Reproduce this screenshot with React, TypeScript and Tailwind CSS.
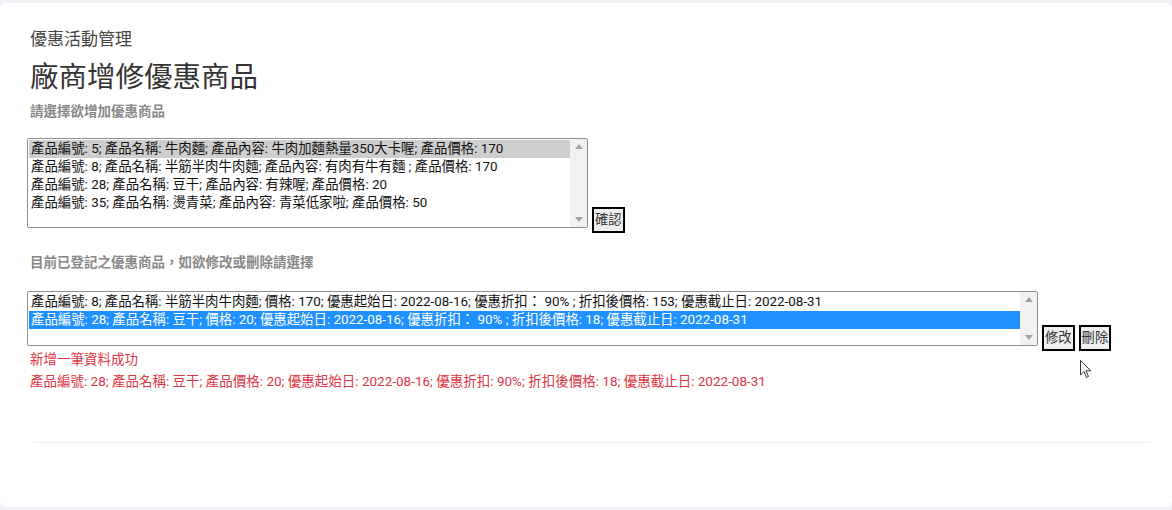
import React, { useState } from 'react';

const font = { fontFamily: '"Roboto", "Noto Sans CJK TC", sans-serif' };

const products = [
  '產品編號: 5; 產品名稱: 牛肉麵; 產品內容: 牛肉加麵熱量350大卡喔; 產品價格: 170',
  '產品編號: 8; 產品名稱: 半筋半肉牛肉麵; 產品內容: 有肉有牛有麵 ; 產品價格: 170',
  '產品編號: 28; 產品名稱: 豆干; 產品內容: 有辣喔; 產品價格: 20',
  '產品編號: 35; 產品名稱: 燙青菜; 產品內容: 青菜低家啦; 產品價格: 50',
];

const discounts = [
  '產品編號: 8; 產品名稱: 半筋半肉牛肉麵; 價格: 170; 優惠起始日: 2022-08-16; 優惠折扣： 90% ; 折扣後價格: 153; 優惠截止日: 2022-08-31',
  '產品編號: 28; 產品名稱: 豆干; 價格: 20; 優惠起始日: 2022-08-16; 優惠折扣： 90% ; 折扣後價格: 18; 優惠截止日: 2022-08-31',
];

const ScrollTrack: React.FC = () => (
  <div className="w-[17px] bg-[#f1f1f1] flex flex-col justify-between items-center py-[5px]">
    <svg width="8" height="5" viewBox="0 0 8 5">
      <path d="M0 5 L4 0 L8 5 Z" fill="#a3a3a3" />
    </svg>
    <svg width="8" height="5" viewBox="0 0 8 5">
      <path d="M0 0 L4 5 L8 0 Z" fill="#a3a3a3" />
    </svg>
  </div>
);

type ListBoxProps = {
  items: string[];
  selected: number;
  focused?: boolean;
  className: string;
  onSelect: (i: number) => void;
};

const ListBox: React.FC<ListBoxProps> = ({ items, selected, focused, className, onSelect }) => (
  <div className={`flex border border-[#8f8f8f] rounded-[2px] bg-white ${className}`}>
    <div className="flex-1 pt-[1px] pl-[1px]">
      {items.map((item, i) => (
        <div
          key={i}
          onClick={() => onSelect(i)}
          className={`h-[18px] leading-[18px] px-[2px] text-[13.4px] whitespace-nowrap cursor-default ${
            i === selected
              ? focused
                ? 'bg-[#1e90ff] text-white'
                : 'bg-[#cecece] text-[#111]'
              : 'text-[#111]'
          }`}
        >
          {item}
        </div>
      ))}
    </div>
    <ScrollTrack />
  </div>
);

const Btn: React.FC<{ label: string }> = ({ label }) => (
  <button className="h-[26px] px-[1px] border-2 border-black bg-[#efefef] text-[13.3px] leading-[18px] text-[#333] mb-[-5px]">
    {label}
  </button>
);

const App: React.FC = () => {
  const [product, setProduct] = useState(0);
  const [discount, setDiscount] = useState(1);

  return (
    <div className="h-[510px] bg-[#f1f0f7] pt-[3px] pb-[3px]" style={font}>
      <div className="relative h-full bg-white rounded-md pl-[30px] pr-[22px]">
        <div className="pt-[24px] text-[17px] leading-[24px] text-[#444]">優惠活動管理</div>
        <h1 className="mt-[10px] text-[28.5px] leading-[34px] text-[#333]">廠商增修優惠商品</h1>
        <div className="mt-[7px] text-[13.5px] leading-[18px] font-semibold text-[#888]">請選擇欲增加優惠商品</div>

        <div className="mt-[18px] -ml-[3px] flex items-end gap-[4px]">
          <ListBox
            items={products}
            selected={product}
            onSelect={setProduct}
            className="w-[561px] h-[90px]"
          />
          <Btn label="確認" />
        </div>

        <div className="mt-[25px] text-[13.5px] leading-[18px] font-semibold text-[#888]">
          目前已登記之優惠商品，如欲修改或刪除請選擇
        </div>

        <div className="mt-[20px] -ml-[3px] flex items-end gap-[4px]">
          <ListBox
            items={discounts}
            selected={discount}
            focused
            onSelect={setDiscount}
            className="w-[1011px] h-[55px]"
          />
          <Btn label="修改" />
          <Btn label="刪除" />
        </div>

        <div className="mt-[2px] text-[13.5px] leading-[22px] text-[#dc3545]">
          <div>新增一筆資料成功</div>
          <div>
            產品編號: 28; 產品名稱: 豆干; 產品價格: 20; 優惠起始日: 2022-08-16; 優惠折扣: 90%; 折扣後價格: 18; 優惠截止日: 2022-08-31
          </div>
        </div>

        <hr className="mt-[50px] ml-[3px] border-t border-[#ebebeb]" />

        <svg
          className="absolute left-[1080px] top-[357px]"
          width="12"
          height="19"
          viewBox="0 0 12 19"
        >
          <path
            d="M0.5 0.5 L0.5 15 L4 11.5 L6.5 17.5 L8.5 16.5 L6 10.8 L10.8 10.8 Z"
            fill="white"
            stroke="#333"
            strokeWidth="1"
            strokeLinejoin="round"
          />
        </svg>
      </div>
    </div>
  );
};

export default App;
